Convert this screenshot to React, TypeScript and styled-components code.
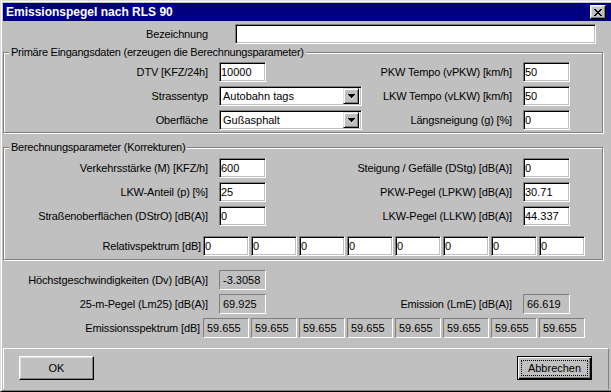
import React from 'react';
import styled, { createGlobalStyle, css } from 'styled-components';

const GlobalStyle = createGlobalStyle`
    html, body {
        margin: 0;
        padding: 0;
        overflow: hidden;
        background: #c0c0c0;
    }
    body {
        font-family: 'Liberation Sans', Arial, sans-serif;
        font-size: 11px;
        color: #000;
    }
`;

const Window = styled.div`
    box-sizing: border-box;
    display: flex;
    flex-direction: column;
    width: 614px;
    height: 392px;
    padding: 2px;

    background: #c0c0c0;
    border-style: solid;
    border-width: 1px;
    border-color: #dfdfdf #000 #000 #dfdfdf;
    box-shadow: inset 1px 1px 0 #fff, inset -1px -1px 0 #808080;
`;

const TitleBar = styled.div`
    display: flex;
    align-items: center;
    justify-content: space-between;
    flex: none;

    height: 18px;
    padding: 0 5px 0 3px;

    background: #000080;
`;

const Title = styled.span`
    color: #fff;
    font-weight: bold;
    font-size: 12px;
    line-height: 18px;
    white-space: nowrap;
`;

const CloseButton = styled.div`
    box-sizing: border-box;
    display: flex;
    align-items: center;
    justify-content: center;

    width: 16px;
    height: 14px;

    background: #c0c0c0;
    border-style: solid;
    border-width: 1px;
    border-color: #fff #000 #000 #fff;
    box-shadow: inset -1px -1px 0 #808080, inset 1px 1px 0 #dfdfdf;
`;

const Row = styled.div<{ $split?: number; $top?: number }>`
    display: grid;
    grid-template-columns: ${({ $split }) => $split ?? 263}px 1fr;
    height: 20px;
    margin-top: ${({ $top }) => $top ?? 0}px;
`;

const Field = styled.div<{ $top?: number }>`
    display: flex;
    align-items: center;
    height: 20px;
    margin-top: ${({ $top }) => $top ?? 0}px;
`;

const Label = styled.span<{ $width: number; $gap?: number }>`
    flex: none;
    width: ${({ $width }) => $width}px;
    margin-right: ${({ $gap }) => $gap ?? 11}px;
    text-align: right;
    letter-spacing: -0.15px;
    white-space: nowrap;
`;

const sunken = css`
    box-sizing: border-box;
    height: 20px;
    border-style: solid;
    border-width: 1px;
    border-color: #808080 #fff #fff #808080;
    box-shadow: inset 1px 1px 0 #000, inset -1px -1px 0 #c0c0c0;
`;

const Edit = styled.input<{ $width: number }>`
    ${sunken};
    flex: none;
    width: ${({ $width }) => $width}px;
    margin: 0;
    padding: 0 0 0 1px;

    font: inherit;
    color: #000;
    background: #fff;
    outline: none;
`;

const Static = styled.div<{ $width: number }>`
    box-sizing: border-box;
    display: flex;
    align-items: center;
    flex: none;

    width: ${({ $width }) => $width}px;
    height: 20px;
    padding-left: 3px;

    background: #c0c0c0;
    border-style: solid;
    border-width: 1px;
    border-color: #808080 #fff #fff #808080;
    white-space: nowrap;
    overflow: hidden;
`;

const Combo = styled.div`
    ${sunken};
    display: flex;
    align-items: center;
    justify-content: space-between;
    flex: none;

    width: 143px;
    padding: 2px 2px 2px 3px;
    background: #fff;
`;

const DropButton = styled.div`
    box-sizing: border-box;
    display: flex;
    align-items: center;
    justify-content: center;

    width: 16px;
    height: 16px;

    background: #c0c0c0;
    border-style: solid;
    border-width: 1px;
    border-color: #dfdfdf #000 #000 #dfdfdf;
    box-shadow: inset 1px 1px 0 #fff, inset -1px -1px 0 #808080;
`;

const Group = styled.div<{ $padTop: number; $padBottom: number; $top: number }>`
    position: relative;
    box-sizing: border-box;
    display: flex;
    flex-direction: column;
    gap: 4px;
    flex: none;

    width: 600px;
    margin-top: ${({ $top }) => $top}px;
    padding: ${({ $padTop }) => $padTop}px 0 ${({ $padBottom }) => $padBottom}px;

    border: 1px solid #808080;
    box-shadow: inset 1px 1px 0 #fff, 1px 1px 0 #fff;
`;

const GroupTitle = styled.span`
    position: absolute;
    top: -7px;
    left: 5px;
    padding: 0 2px;

    line-height: 13px;
    letter-spacing: -0.25px;
    background: #c0c0c0;
    white-space: nowrap;
`;

const Spectrum = styled.div`
    display: flex;
    gap: 2px;
`;

const Results = styled.div`
    display: flex;
    flex-direction: column;
    gap: 4px;
    margin-top: 10px;
`;

const ButtonPanel = styled.div`
    display: flex;
    align-items: flex-start;
    justify-content: space-between;
    flex: 1;

    margin: 10px 2px 0 0;
    padding: 7px 16px 0 15px;

    border-top: 1px solid #fff;
    border-left: 1px solid #fff;
    border-right: 1px solid #808080;
`;

const DialogButton = styled.button<{ $focused?: boolean }>`
    box-sizing: border-box;
    width: 75px;
    height: 24px;
    padding: 0;

    font: inherit;
    color: #000;
    background: #c0c0c0;
    border-style: solid;
    border-width: 1px;
    border-color: #fff #000 #000 #fff;
    box-shadow: inset -1px -1px 0 #808080, inset 1px 1px 0 #dfdfdf;

    ${({ $focused }) =>
        $focused &&
        css`
            border-color: #000;
            box-shadow: inset 1px 1px 0 #fff, inset -1px -1px 0 #000, inset -2px -2px 0 #808080;
            outline: 1px dotted #000;
            outline-offset: -5px;
        `}
`;

const CloseIcon = () => (
    <svg width="8" height="7" viewBox="0 0 8 7" shapeRendering="crispEdges">
        <path
            fill="#000"
            d="M0 0h2v1H0zM6 0h2v1H6zM1 1h2v1H1zM5 1h2v1H5zM2 2h4v1H2zM3 3h2v1H3zM2 4h4v1H2zM1 5h2v1H1zM5 5h2v1H5zM0 6h2v1H0zM6 6h2v1H6z"
        />
    </svg>
);

const ArrowIcon = () => (
    <svg width="7" height="4" viewBox="0 0 7 4" shapeRendering="crispEdges">
        <path fill="#000" d="M0 0h7v1H0zM1 1h5v1H1zM2 2h3v1H2zM3 3h1v1H3z" />
    </svg>
);

const relSpectrum = Array(8).fill('0');
const emSpectrum = Array(8).fill('59.655');

const App: React.FC = () => {
    return (
        <>
            <GlobalStyle />
            <Window>
                <TitleBar>
                    <Title>Emissionspegel nach RLS 90</Title>
                    <CloseButton>
                        <CloseIcon />
                    </CloseButton>
                </TitleBar>

                <Field $top={3}>
                    <Label $width={205} $gap={27}>
                        Bezeichnung
                    </Label>
                    <Edit $width={361} defaultValue="" />
                </Field>

                <Group $top={8} $padTop={9} $padBottom={2}>
                    <GroupTitle>Primäre Eingangsdaten (erzeugen die Berechnungsparameter)</GroupTitle>
                    <Row $split={262}>
                        <Field>
                            <Label $width={204}>DTV [KFZ/24h]</Label>
                            <Edit $width={47} defaultValue="10000" />
                        </Field>
                        <Field>
                            <Label $width={246}>PKW Tempo (vPKW) [km/h]</Label>
                            <Edit $width={47} defaultValue="50" />
                        </Field>
                    </Row>
                    <Row $split={262}>
                        <Field>
                            <Label $width={204}>Strassentyp</Label>
                            <Combo>
                                <span>Autobahn tags</span>
                                <DropButton>
                                    <ArrowIcon />
                                </DropButton>
                            </Combo>
                        </Field>
                        <Field>
                            <Label $width={246}>LKW Tempo (vLKW) [km/h]</Label>
                            <Edit $width={47} defaultValue="50" />
                        </Field>
                    </Row>
                    <Row $split={262}>
                        <Field>
                            <Label $width={204}>Oberfläche</Label>
                            <Combo>
                                <span>Gußasphalt</span>
                                <DropButton>
                                    <ArrowIcon />
                                </DropButton>
                            </Combo>
                        </Field>
                        <Field>
                            <Label $width={246}>Längsneigung (g) [%]</Label>
                            <Edit $width={47} defaultValue="0" />
                        </Field>
                    </Row>
                </Group>

                <Group $top={14} $padTop={10} $padBottom={3}>
                    <GroupTitle>Berechnungsparameter (Korrekturen)</GroupTitle>
                    <Row $split={262}>
                        <Field>
                            <Label $width={204}>Verkehrsstärke (M) [KFZ/h]</Label>
                            <Edit $width={47} defaultValue="600" />
                        </Field>
                        <Field>
                            <Label $width={246}>Steigung / Gefälle (DStg) [dB(A)]</Label>
                            <Edit $width={47} defaultValue="0" />
                        </Field>
                    </Row>
                    <Row $split={262}>
                        <Field>
                            <Label $width={204}>LKW-Anteil (p) [%]</Label>
                            <Edit $width={47} defaultValue="25" />
                        </Field>
                        <Field>
                            <Label $width={246}>PKW-Pegel (LPKW) [dB(A)]</Label>
                            <Edit $width={47} defaultValue="30.71" />
                        </Field>
                    </Row>
                    <Row $split={262}>
                        <Field>
                            <Label $width={204}>Straßenoberflächen (DStrO) [dB(A)]</Label>
                            <Edit $width={47} defaultValue="0" />
                        </Field>
                        <Field>
                            <Label $width={246}>LKW-Pegel (LLKW) [dB(A)]</Label>
                            <Edit $width={47} defaultValue="44.337" />
                        </Field>
                    </Row>
                    <Field $top={6}>
                        <Label $width={197} $gap={2}>
                            Relativspektrum [dB]
                        </Label>
                        <Spectrum>
                            {relSpectrum.map((value, i) => (
                                <Edit key={`rel-${i}`} $width={46} defaultValue={value} />
                            ))}
                        </Spectrum>
                    </Field>
                </Group>

                <Results>
                    <Field>
                        <Label $width={205}>Höchstgeschwindigkeiten (Dv) [dB(A)]</Label>
                        <Static $width={47}>-3.3058</Static>
                    </Field>
                    <Row>
                        <Field>
                            <Label $width={205}>25-m-Pegel (Lm25) [dB(A)]</Label>
                            <Static $width={47}>69.925</Static>
                        </Field>
                        <Field>
                            <Label $width={246}>Emission (LmE) [dB(A)]</Label>
                            <Static $width={47}>66.619</Static>
                        </Field>
                    </Row>
                    <Field>
                        <Label $width={197} $gap={3}>
                            Emissionsspektrum [dB]
                        </Label>
                        <Spectrum>
                            {emSpectrum.map((value, i) => (
                                <Static key={`em-${i}`} $width={46}>
                                    {value}
                                </Static>
                            ))}
                        </Spectrum>
                    </Field>
                </Results>

                <ButtonPanel>
                    <DialogButton type="button">OK</DialogButton>
                    <DialogButton type="button" $focused>
                        Abbrechen
                    </DialogButton>
                </ButtonPanel>
            </Window>
        </>
    );
};

export default App;
